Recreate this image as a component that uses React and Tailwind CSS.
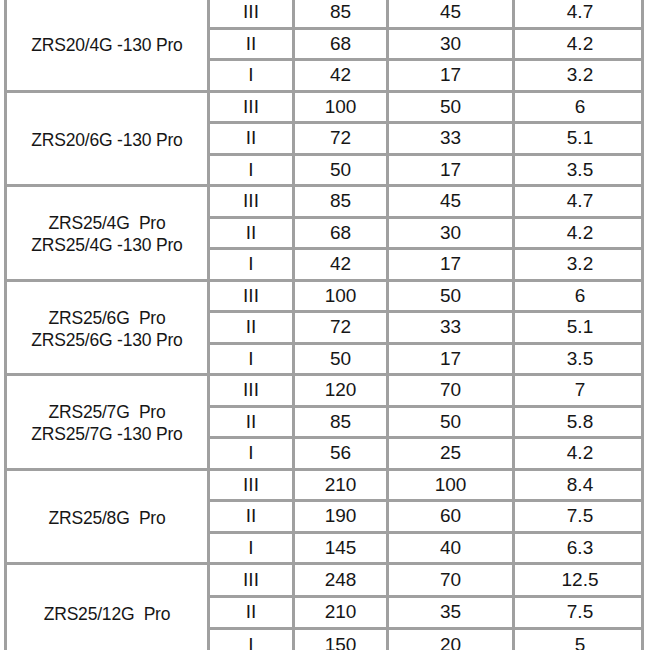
import React from 'react';

const groups = [
  {
    names: ['ZRS20/4G -130 Pro'],
    rows: [['III', '85', '45', '4.7'], ['II', '68', '30', '4.2'], ['I', '42', '17', '3.2']],
  },
  {
    names: ['ZRS20/6G -130 Pro'],
    rows: [['III', '100', '50', '6'], ['II', '72', '33', '5.1'], ['I', '50', '17', '3.5']],
  },
  {
    names: ['ZRS25/4G  Pro', 'ZRS25/4G -130 Pro'],
    rows: [['III', '85', '45', '4.7'], ['II', '68', '30', '4.2'], ['I', '42', '17', '3.2']],
  },
  {
    names: ['ZRS25/6G  Pro', 'ZRS25/6G -130 Pro'],
    rows: [['III', '100', '50', '6'], ['II', '72', '33', '5.1'], ['I', '50', '17', '3.5']],
  },
  {
    names: ['ZRS25/7G  Pro', 'ZRS25/7G -130 Pro'],
    rows: [['III', '120', '70', '7'], ['II', '85', '50', '5.8'], ['I', '56', '25', '4.2']],
  },
  {
    names: ['ZRS25/8G  Pro'],
    rows: [['III', '210', '100', '8.4'], ['II', '190', '60', '7.5'], ['I', '145', '40', '6.3']],
  },
  {
    names: ['ZRS25/12G  Pro'],
    rows: [['III', '248', '70', '12.5'], ['II', '210', '35', '7.5'], ['I', '150', '20', '5']],
    tall: true,
  },
];

function Row({ cells, tall }) {
  return (
    <div
      className={`flex border-t-[3px] border-[#a0a0a0] ${tall ? 'h-[32.5px]' : 'h-[31.5px]'}`}
    >
      <div className="w-[85px] flex items-center justify-center border-r-[3px] border-[#a0a0a0] text-[19px]">
        {cells[0]}
      </div>
      <div className="w-[94px] flex items-center justify-center border-r-[3px] border-[#a0a0a0] text-[19px]">
        {cells[1]}
      </div>
      <div className="w-[126px] flex items-center justify-center border-r-[3px] border-[#a0a0a0] text-[19px]">
        {cells[2]}
      </div>
      <div className="flex-1 flex items-center justify-center text-[19px] pl-[4px]">
        {cells[3]}
      </div>
    </div>
  );
}

export default function App() {
  return (
    <div className="w-[650px] h-[650px] overflow-hidden bg-white text-[#161616] font-['Liberation_Sans',Arial,sans-serif]">
      <div className="ml-[4px] -mt-[5px] w-[640px] border-x-[3px] border-[#a0a0a0]">
        {groups.map((g, i) => (
          <div key={i} className="flex">
            <div className="w-[203px] flex flex-col items-center justify-center border-t-[3px] border-r-[3px] border-[#a0a0a0] text-[17.5px] leading-[22px] tracking-[-0.2px] pt-[3px]">
              {g.names.map((n) => (
                <div key={n} className="whitespace-pre">
                  {n}
                </div>
              ))}
            </div>
            <div className="flex-1 flex flex-col">
              {g.rows.map((r, j) => (
                <Row key={j} cells={r} tall={g.tall} />
              ))}
            </div>
          </div>
        ))}
      </div>
    </div>
  );
}
